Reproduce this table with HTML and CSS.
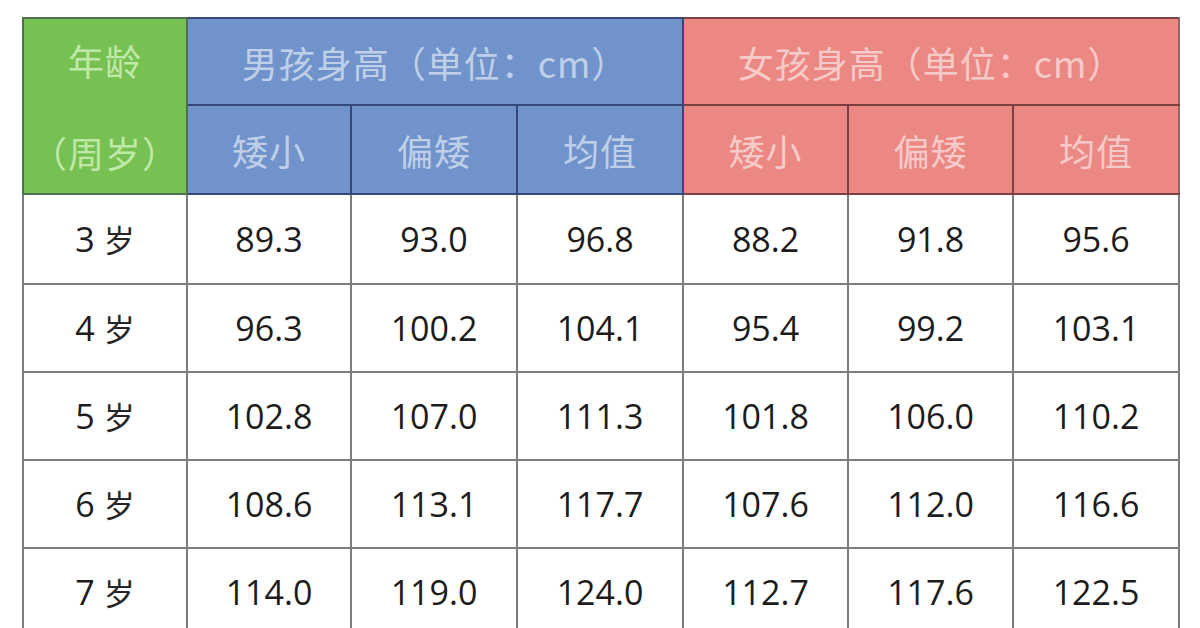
FILE: index.html
```html
<!DOCTYPE html>
<html lang="zh-CN">
<head>
<meta charset="utf-8">
<title>儿童身高表</title>
<link rel="stylesheet" href="styles.css">
</head>
<body>
<table class="chart">
  <colgroup>
    <col class="c-age"><col class="c-m1"><col class="c-m2"><col class="c-m3"><col class="c-f1"><col class="c-f2"><col class="c-f3">
  </colgroup>
  <thead>
    <tr class="h1">
      <th class="age" rowspan="2"><span class="age-top">年龄</span><span class="age-bot">（周岁）</span></th>
      <th class="boy" colspan="3">男孩身高（单位：cm）</th>
      <th class="girl" colspan="3">女孩身高（单位：cm）</th>
    </tr>
    <tr class="h2">
      <th class="boy">矮小</th><th class="boy">偏矮</th><th class="boy">均值</th>
      <th class="girl">矮小</th><th class="girl">偏矮</th><th class="girl">均值</th>
    </tr>
  </thead>
  <tbody>
    <tr><td class="lbl">3 <span class="sui">岁</span></td><td>89.3</td><td>93.0</td><td>96.8</td><td>88.2</td><td>91.8</td><td>95.6</td></tr>
    <tr><td class="lbl">4 <span class="sui">岁</span></td><td>96.3</td><td>100.2</td><td>104.1</td><td>95.4</td><td>99.2</td><td>103.1</td></tr>
    <tr><td class="lbl">5 <span class="sui">岁</span></td><td>102.8</td><td>107.0</td><td>111.3</td><td>101.8</td><td>106.0</td><td>110.2</td></tr>
    <tr><td class="lbl">6 <span class="sui">岁</span></td><td>108.6</td><td>113.1</td><td>117.7</td><td>107.6</td><td>112.0</td><td>116.6</td></tr>
    <tr><td class="lbl">7 <span class="sui">岁</span></td><td>114.0</td><td>119.0</td><td>124.0</td><td>112.7</td><td>117.6</td><td>122.5</td></tr>
  </tbody>
</table>
</body>
</html>
```

FILE: styles.css
```css
html, body {
  margin: 0;
  padding: 0;
  background: #ffffff;
  overflow: hidden;
  width: 1200px;
  height: 628px;
}
body {
  padding: 17px 0 0 22px;
  box-sizing: border-box;
}
.chart {
  border-collapse: collapse;
  table-layout: fixed;
  width: 1156px;
}
.c-age { width: 164px; }
.c-m1 { width: 164px; }
.c-m2 { width: 166px; }
.c-m3 { width: 166px; }
.c-f1 { width: 165px; }
.c-f2 { width: 165px; }
.c-f3 { width: 166px; }

th {
  font-family: "Noto Sans CJK SC", sans-serif;
  font-weight: 400;
  font-size: 36px;
  color: rgba(255, 255, 255, 0.58);
  text-align: center;
  vertical-align: middle;
  padding: 0;
  letter-spacing: 1px;
}
.h1 { height: 87px; }
.h2 { height: 89px; }
th.age {
  background: #77c052;
  border: 2px solid #4f6f50;
  color: rgba(230, 255, 215, 0.68);
}
.age-top, .age-bot {
  display: block;
}
.age-top { margin-bottom: 40px; }
th.boy {
  background: #7093cb;
  border: 2px solid #34497a;
}
th.girl {
  background: #eb8883;
  border: 2px solid #7c3f42;
}
.h1 th.girl { border-right-color: #8a6a6c; }
.h2 th.girl:last-child { border-right-color: #8a6a6c; }

tbody tr { height: 88px; }
tbody tr:first-child { height: 90px; }
td {
  font-family: "Open Sans", "Liberation Sans", sans-serif;
  font-size: 34px;
  color: #1c1c1c;
  text-align: center;
  vertical-align: middle;
  padding: 0;
  border: 2px solid #7d7d7d;
  background: #ffffff;
}
.sui {
  font-family: "Noto Sans CJK SC", sans-serif;
  font-size: 31px;
  color: #262626;
}
```
